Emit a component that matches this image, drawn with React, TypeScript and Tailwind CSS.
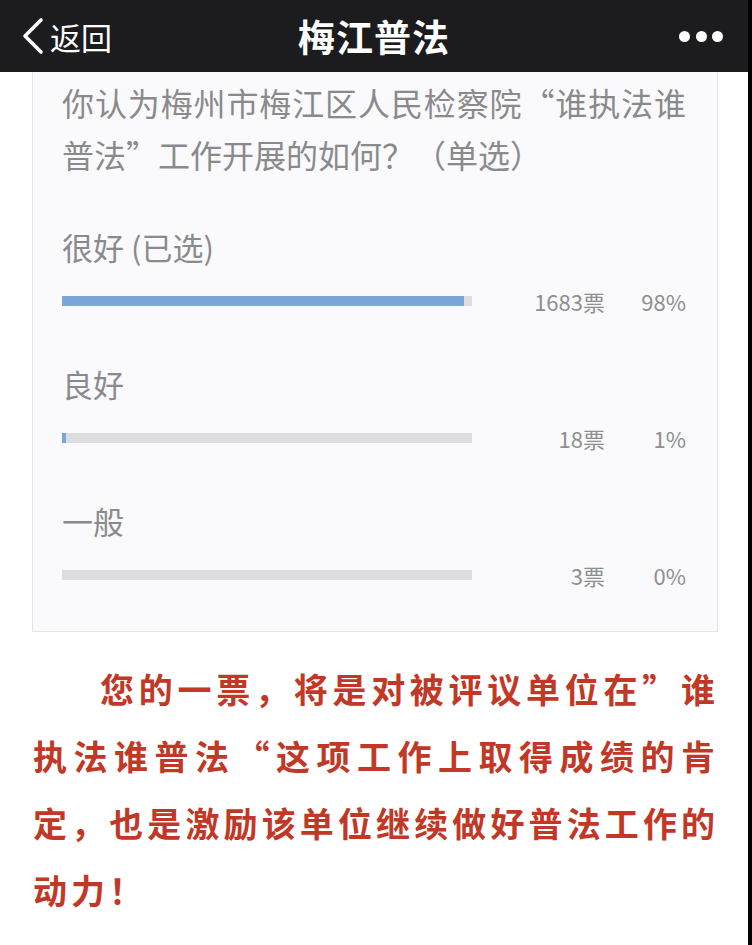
import React from 'react';

interface PollOption {
  label: string;
  votes: number;
  percent: number;
}

const options: PollOption[] = [
  { label: '很好 (已选)', votes: 1683, percent: 98 },
  { label: '良好', votes: 18, percent: 1 },
  { label: '一般', votes: 3, percent: 0 },
];

const font = { fontFamily: '"Noto Sans CJK SC", "Noto Sans", sans-serif' };

function Header() {
  return (
    <div className="relative flex h-[72px] items-center bg-[#1c1b1e] text-white">
      <div className="flex items-center pl-[20px]">
        <svg width="26" height="38" viewBox="0 0 26 38" className="mr-[4px]">
          <path d="M21 3 L5 19 L21 35" fill="none" stroke="white" strokeWidth="3.6" strokeLinecap="round" strokeLinejoin="round" />
        </svg>
        <span className="text-[31px] leading-none">返回</span>
      </div>
      <div className="absolute inset-x-0 text-center text-[37px] font-bold leading-none tracking-[1px] pointer-events-none">
        梅江普法
      </div>
      <div className="ml-auto flex items-center gap-[5.5px] pr-[25px]">
        <span className="h-[11px] w-[11px] rounded-full bg-white" />
        <span className="h-[11px] w-[11px] rounded-full bg-white" />
        <span className="h-[11px] w-[11px] rounded-full bg-white" />
      </div>
    </div>
  );
}

function OptionRow({ option, first }: { option: PollOption; first: boolean }) {
  return (
    <div className={first ? 'mt-[47px]' : 'mt-[48px]'}>
      <div className="h-[40px] text-[31px] leading-[40px] text-[#8a8a8c]">{option.label}</div>
      <div className="mt-[19px] flex h-[30px] items-center">
        <div className="relative h-[10px] w-[410px] bg-[#dddde0]">
          {option.percent > 0 && (
            <div
              className="absolute inset-y-0 left-0 bg-[#7ba4d9]"
              style={{ width: `${Math.max(4, (option.percent / 100) * 410)}px` }}
            />
          )}
        </div>
        <div className="flex-1 text-right text-[22px] leading-none text-[#8e8e90]">{option.votes}票</div>
        <div className="w-[81px] text-right text-[22px] leading-none text-[#8e8e90]">{option.percent}%</div>
      </div>
    </div>
  );
}

export default function App() {
  return (
    <div className="flex min-h-[945px] bg-white" style={font}>
      <div className="flex-1">
        <Header />
        <div className="ml-[32px] mr-[30px] border border-t-0 border-[#e4e4e8] bg-[#fafafc] pb-[41px] pl-[29px] pr-[31px] pt-[4px]">
          <div className="text-[32px] leading-[52px] text-[#8a8a8c]">
            <div className="text-justify [text-align-last:justify]">你认为梅州市梅江区人民检察院“谁执法谁</div>
            <div>普法”工作开展的如何？（单选）</div>
          </div>
          {options.map((o, i) => (
            <OptionRow key={o.label} option={o} first={i === 0} />
          ))}
        </div>
        {/* 红色提示 */}
        <div className="mt-[23px] px-[33px] text-[34px] font-bold leading-[67px] text-[#c23826]">
          <div className="text-justify [text-align-last:justify] pl-[67px]">您的一票，将是对被评议单位在”谁</div>
          <div className="text-justify [text-align-last:justify]">执法谁普法“这项工作上取得成绩的肯</div>
          <div className="text-justify [text-align-last:justify]">定，也是激励该单位继续做好普法工作的</div>
          <div className="tracking-[4px]">动力！</div>
        </div>
      </div>
      <div className="w-[4px] bg-black" />
    </div>
  );
}
